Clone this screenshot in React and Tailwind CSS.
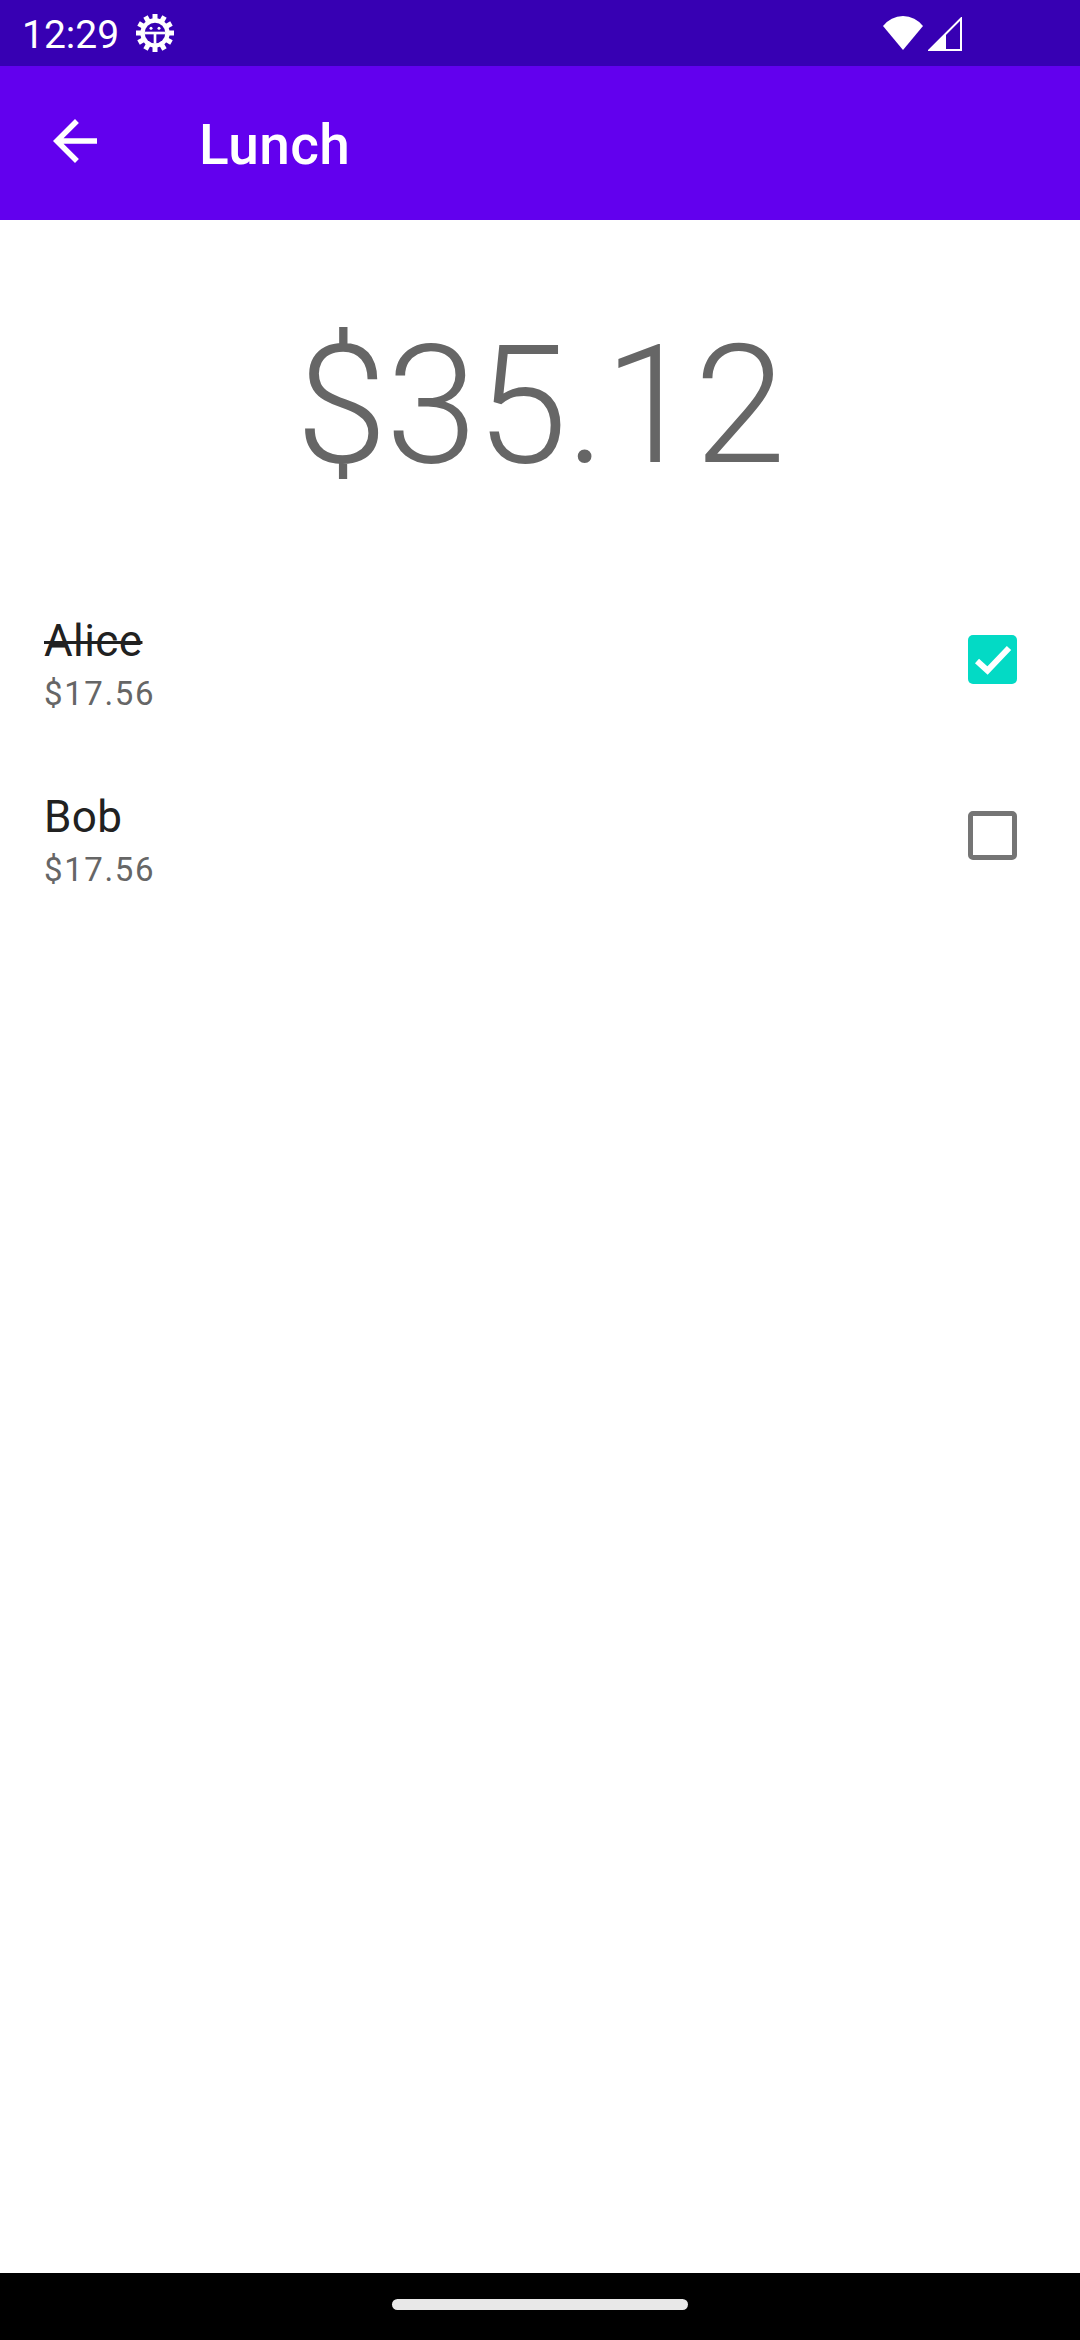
import React from "react";

const people = [
  { name: "Alice", share: "$17.56", paid: true },
  { name: "Bob", share: "$17.56", paid: false },
];

function Gear() {
  const teeth = [0, 30, 60, 90, 120, 150, 180, 210, 240, 270, 300, 330];
  return (
    <svg viewBox="0 0 24 24" className="w-[40px] h-[40px]">
      {teeth.map((a) => (
        <rect key={a} x="10.5" y="0.6" width="3" height="4.4" fill="white" transform={`rotate(${a} 12 12)`} />
      ))}
      <circle cx="12" cy="12" r="8.8" fill="white" />
      <circle cx="12" cy="12" r="6.2" fill="#3700b3" />
      <rect x="5.6" y="11.2" width="12.8" height="1.6" fill="white" />
      <rect x="11.2" y="12" width="1.6" height="6.4" fill="white" />
      <circle cx="9.6" cy="9.2" r="0.9" fill="white" />
      <circle cx="14.4" cy="9.2" r="0.9" fill="white" />
    </svg>
  );
}

function StatusBar() {
  return (
    <div className="h-[66px] bg-[#3700b3] flex items-center pl-[22px] pr-[118px] text-white">
      <span className="text-[39px] leading-[66px] pt-[3px]">12:29</span>
      <span className="ml-[16px] flex">
        <Gear />
      </span>
      <div className="flex-1" />
      <svg viewBox="0 0 40 34" className="w-[40px] h-[34px] mt-[-1px]">
        <path d="M0 10 A25 25 0 0 1 40 10 L20 34 Z" fill="white" />
      </svg>
      <svg viewBox="0 0 34 34" className="w-[34px] h-[34px] ml-[5px] mt-[1px]">
        <path d="M1.5 33 L33 1.5 L33 33 Z" fill="none" stroke="white" strokeWidth="2" />
        <path d="M0 34 L18 16 L18 34 Z" fill="white" />
      </svg>
    </div>
  );
}

function AppBar() {
  return (
    <div className="h-[154px] bg-[#6200ee] flex items-start text-white">
      <button className="mt-[42px] ml-[42px] w-[66px] h-[66px] flex items-center justify-center">
        <svg viewBox="0 0 24 24" className="w-[66px] h-[66px]" fill="white">
          <path d="M20 11H7.83l5.59-5.59L12 4l-8 8 8 8 1.41-1.41L7.83 13H20v-2z" />
        </svg>
      </button>
      <h1 className="ml-[91px] mt-[52px] text-[55px] leading-[55px] font-medium tracking-[0.4px]">Lunch</h1>
    </div>
  );
}

function Checkbox({ checked }) {
  if (checked) {
    return (
      <div className="w-[49px] h-[49px] rounded-[5px] bg-[#03dac5] flex items-center justify-center">
        <svg viewBox="0 0 48 49" className="w-[48px] h-[49px]">
          <polyline points="8,26 18.5,35.5 40,13" fill="none" stroke="white" strokeWidth="6" />
        </svg>
      </div>
    );
  }
  return <div className="w-[49px] h-[49px] rounded-[5px] border-[5px] border-[#757575]" />;
}

function PersonRow({ person }) {
  return (
    <div className="flex items-start pl-[44px] pr-[63px]">
      <div className="flex-1 flex flex-col">
        <span
          className={`text-[44px] leading-[60px] text-[#212121] tracking-[0.4px] ${person.paid ? "line-through decoration-[3px]" : ""}`}
        >
          {person.name}
        </span>
        <span className="text-[33px] leading-[46px] text-[#666666] tracking-[1.6px]">{person.share}</span>
      </div>
      <div className="mt-[24px]">
        <Checkbox checked={person.paid} />
      </div>
    </div>
  );
}

export default function App() {
  return (
    <div className="h-[2340px] flex flex-col bg-white font-['Roboto',sans-serif]">
      <StatusBar />
      <AppBar />
      <main className="flex-1 flex flex-col">
        <div className="mt-[103px] text-center text-[165px] leading-[165px] font-light text-[#666666] tracking-[-1.4px]">
          $35.12
        </div>
        <div className="mt-[123px] flex flex-col gap-[70px]">
          {people.map((p) => (
            <PersonRow key={p.name} person={p} />
          ))}
        </div>
      </main>
      <div className="h-[67px] bg-black flex items-center justify-center">
        <div className="w-[296px] h-[11px] rounded-full bg-[#e8e8e8] mt-[-4px]" />
      </div>
    </div>
  );
}
